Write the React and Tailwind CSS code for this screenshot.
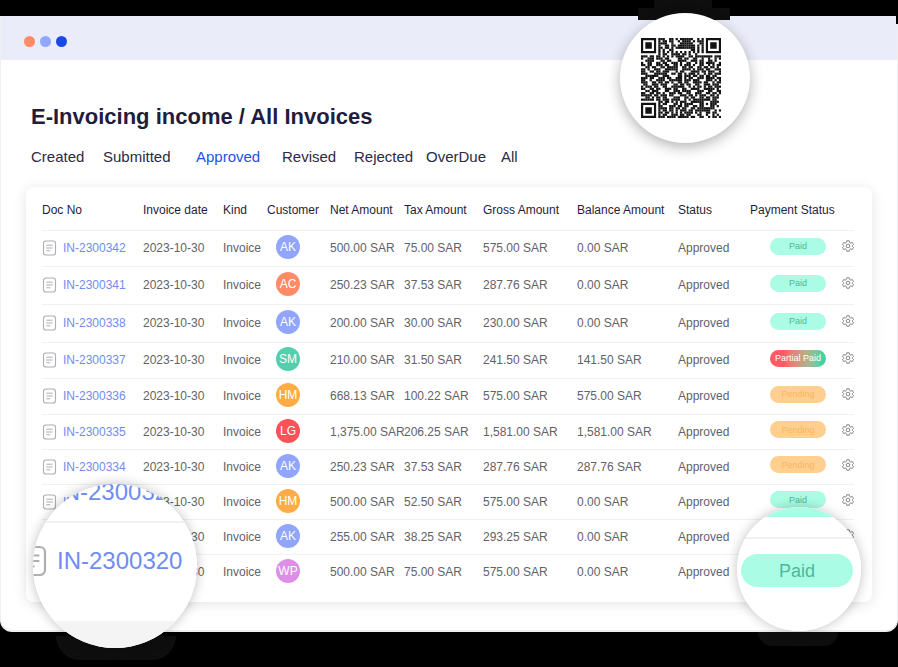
const tabs = ["Created", "Submitted", "Approved", "Revised", "Rejected", "OverDue", "All"];

const customers = {
  AK: "bg-[#90a5fb]",
  AC: "bg-[#ff8b66]",
  SM: "bg-[#55ceae]",
  HM: "bg-[#ffab48]",
  LG: "bg-[#fb5257]",
  WP: "bg-[#dd8fe8]",
};

const statuses = {
  Paid: "bg-[#aafde4] text-[#4fb79a]",
  "Partial Paid": "bg-linear-to-r from-[#ff5a63] from-25% to-[#45d3a5] to-90% text-white",
  Pending: "bg-[#ffcf90] text-[#f8b75c]",
};

const invoices = [
  ["IN-2300342", "AK", "500.00", "75.00", "575.00", "0.00", "Paid", "h-9"],
  ["IN-2300341", "AC", "250.23", "37.53", "287.76", "0.00", "Paid", "h-[38px]"],
  ["IN-2300338", "AK", "200.00", "30.00", "230.00", "0.00", "Paid", "h-[38px]"],
  ["IN-2300337", "SM", "210.00", "31.50", "241.50", "141.50", "Partial Paid", "h-9"],
  ["IN-2300336", "HM", "668.13", "100.22", "575.00", "575.00", "Pending", "h-9"],
  ["IN-2300335", "LG", "1,375.00", "206.25", "1,581.00", "1,581.00", "Pending", "h-[35px]"],
  ["IN-2300334", "AK", "250.23", "37.53", "287.76", "287.76", "Pending", "h-[35px]"],
  ["IN-2300322", "HM", "500.00", "52.50", "575.00", "0.00", "Paid", "h-[35px]"],
  ["IN-2300321", "AK", "255.00", "38.25", "293.25", "0.00", "Paid", "h-[35px]"],
  ["IN-2300320", "WP", "500.00", "75.00", "575.00", "0.00", "Paid", "h-[35px]"],
];

const qrRows = [
  "........###..##.#.######..#.#........",
  "........#.##.##..#.####.#.###........",
  "........####..#...######...##........",
  "........#..##.##.########.#.#........",
  "........##.##.#.#########.#.#........",
  "........#.#..##........##.#.#........",
  "........#.#.#.#.#.#.#.#.#.#.#........",
  "........#.##..####.##.#..#...........",
  "###.##.##.#.#.#.####..##.########.###",
  "#..###.###.##....##.##..##..#..#..#.#",
  "..####...##.##...####..###.##..##.#..",
  "#..##..##.##..###.#..##..#.##.####..#",
  "##.##..###.##..##.#.###.#..##..#.#.##",
  "..##.##..##.#####..##.##..##.##.##.#.",
  "##.#..###..######..####.#.###.##..###",
  "##..##.##.###...#.##...####.##.###..#",
  "###...######..##.##.#.###.#..#.##.###",
  "..######..###....##.###.##.##.##.##..",
  "###.##..###.##..###.#.##..###.####.##",
  "##..#..####..######.###.###...###.#.#",
  "###..##.##.##.#..##.##..####.##..#.##",
  ".##..###.###...##.##.##..##..###.###.",
  "#.###.##..##..######..#.#.##.#.##.###",
  "##..##.##..###.##..##..####..#####.#.",
  "..##.###...##..###.####...###..##..##",
  "##..##.##.#..###.##..##..###..##.##.#",
  "#####.##.###.##...###.##.#.###..##.#.",
  "..##.#.##.##...###..##.##..##.##.###.",
  "######.##.###.####..#.#.########.##..",
  "........##.##.#.#.###..######...####.",
  "........#.##...##.#.####...##.#.###..",
  "........##...###.##.##..##.##...##.#.",
  "........####.##.##.##..##.########...",
  "........#.##.##.#.###.##.#######..#.#",
  "........##.##.#.#.#.####.#.#..##.##..",
  "........#.##..###.##.##...##..#..#.#.",
  "........###.####.#####.##..##..#.##.#",
];

function QrCode() {
  return (
    <svg viewBox="0 0 37 37" className="size-20" fill="#121212" role="img" aria-label="QR code">
      {qrRows.flatMap((row, y) =>
        [...row].map((cell, x) =>
          cell === "#" ? <rect key={`${x}-${y}`} x={x} y={y} width="1.03" height="1.03" /> : null,
        ),
      )}
      {[[0, 0], [30, 0], [0, 30]].map(([x, y]) => (
        <path
          key={`${x}-${y}`}
          fillRule="evenodd"
          d={`M${x} ${y}h7v7h-7zM${x + 1} ${y + 1}v5h5v-5zM${x + 2} ${y + 2}h3v3h-3z`}
        />
      ))}
    </svg>
  );
}

function DocIcon({ className }) {
  return (
    <svg viewBox="0 0 14 16" className={className} fill="none" stroke="#adadb2" strokeLinecap="round" aria-hidden="true">
      <rect x="1" y="1" width="12" height="14" rx="2.6" strokeWidth="1.1" />
      <path d="M4.2 5.2h5.600M4.200 8h5.600M4.200 10.800h3.200" strokeWidth="1" />
    </svg>
  );
}

function GearIcon() {
  return (
    <svg viewBox="0 0 24 24" className="size-3" fill="none" stroke="#77777c" strokeWidth="1.8" strokeLinejoin="round" aria-hidden="true">
      <path d="M9.6 1.5h4.8l.8 3.3 2.2 1.3 3.3-1 2.3 4.1L20.600 11.500v1L23 14.800l-2.300 4.100-3.300-1-2.200 1.300-.8 3.300H9.600l-.8-3.300-2.200-1.300-3.300 1L1 14.800l2.400-2.300v-1L1 9.200l2.300-4.100 3.300 1 2.200-1.300z" />
      <circle cx="12" cy="12" r="3.6" />
    </svg>
  );
}

function InvoiceRow({ invoice }) {
  const [id, customer, net, tax, gross, balance, status, height] = invoice;
  return (
    <tr className={`${height} border-t border-[#f1f1f3]`}>
      <td>
        <div className="flex items-center gap-1.5">
          <DocIcon className="h-4 w-[15px]" />
          <a href={`#${id}`} className="text-[#6f8df0]">{id}</a>
        </div>
      </td>
      <td>2023-10-30</td>
      <td>Invoice</td>
      <td>
        <span className={`mb-0.5 ml-[9px] flex size-6 items-center justify-center rounded-full text-white ${customers[customer]}`}>
          {customer}
        </span>
      </td>
      <td>{net} SAR</td>
      <td>{tax} SAR</td>
      <td>{gross} SAR</td>
      <td>{balance} SAR</td>
      <td>Approved</td>
      <td>
        <span className={`mb-1 ml-5 flex h-[17px] w-14 items-center justify-center rounded-full text-[9px] ${statuses[status]}`}>
          {status}
        </span>
      </td>
      <td>
        <button type="button" aria-label={`Settings for ${id}`} className="mb-1 ml-0.5 block">
          <GearIcon />
        </button>
      </td>
    </tr>
  );
}

export default function App() {
  return (
    <div className="relative min-h-screen overflow-hidden bg-black pt-4 pb-9 font-['Liberation_Sans',Arial,sans-serif]">
      <main className="rounded-b-xl border-x border-b-2 border-[#eeeff1] bg-white pb-7">
        <div className="flex h-11 items-center gap-[5px] bg-[#eaedf9] pt-1.5 pl-[23px]">
          <span className="size-[11px] rounded-full bg-[#ff8b66]" />
          <span className="size-[11px] rounded-full bg-[#93a7fa]" />
          <span className="size-[11px] rounded-full bg-[#1b49e6]" />
        </div>

        <h1 className="mt-[43px] ml-[30px] text-[22px] leading-7 font-bold text-[#1f1d3d]">E-Invoicing income / All Invoices</h1>

        <nav className="mt-4 ml-[30px] grid grid-cols-[72px_93px_86px_72px_72px_75px_auto] text-[15px] leading-5 text-[#2c2a45]">
          {tabs.map((tab) => (
            <a key={tab} href={`#${tab}`} className={tab === "Approved" ? "text-[#2152e4]" : ""}>
              {tab}
            </a>
          ))}
        </nav>

        <section className="mt-5 mr-[25px] ml-[25px] rounded-lg bg-white pr-[18px] pb-[13px] pl-4 shadow-[0_2px_14px_rgba(0,0,0,0.11)]">
          <table className="w-full table-fixed border-collapse text-left text-xs whitespace-nowrap text-[#626267]">
            <colgroup>
              <col className="w-[101px]" />
              <col className="w-20" />
              <col className="w-11" />
              <col className="w-[63px]" />
              <col className="w-[74px]" />
              <col className="w-[79px]" />
              <col className="w-[94px]" />
              <col className="w-[101px]" />
              <col className="w-[72px]" />
              <col className="w-[90px]" />
              <col className="w-[14px]" />
            </colgroup>
            <thead className="text-[#1f1d3d]">
              <tr className="h-[43px] [&>th]:pt-1 [&>th]:font-normal">
                <th>Doc No</th>
                <th>Invoice date</th>
                <th>Kind</th>
                <th>Customer</th>
                <th>Net Amount</th>
                <th>Tax Amount</th>
                <th>Gross Amount</th>
                <th>Balance Amount</th>
                <th>Status</th>
                <th>Payment Status</th>
                <td />
              </tr>
            </thead>
            <tbody>
              {invoices.map((invoice) => (
                <InvoiceRow key={invoice[0]} invoice={invoice} />
              ))}
            </tbody>
          </table>
        </section>
      </main>

      {/* Clipped window corner */}
      <div className="absolute top-4 right-0 h-2 w-0.5 bg-black" />

      {/* QR code bubble */}
      <div className="absolute top-0 left-[654px] h-2 w-[58px] bg-[#0e0e0e]" />
      <div className="absolute top-2 left-[638px] h-3 w-[92px] bg-[#0e0e0e]" />
      <div className="absolute top-[13px] left-[620px] flex size-[130px] items-center justify-center rounded-full bg-white pr-2 shadow-[0_4px_14px_rgba(0,0,0,0.3)]">
        <QrCode />
      </div>

      {/* Document number magnifier */}
      <div className="absolute top-[636px] left-[56px] h-6 w-[120px] rounded-b-full bg-[#0e0e0e]" />
      <div className="absolute top-[484px] left-[33px] size-[164px] rounded-full shadow-[0_0_12px_rgba(0,0,0,0.25)]">
        <div className="flex size-full flex-col overflow-hidden rounded-full bg-white text-2xl text-[#6f8df0]">
          <div className="h-[39px] shrink-0 border-b-2 border-[#f1f1f3] pl-[23px] leading-4">IN-2300321</div>
          <div className="-ml-[14px] flex h-[76px] shrink-0 items-center gap-2.5">
            <DocIcon className="h-8 w-7 shrink-0" />
            <span>IN-2300320</span>
          </div>
          <div className="mt-[22px] grow bg-[#f4f4f5]" />
        </div>
      </div>

      {/* Payment status magnifier */}
      <div className="absolute top-[632px] left-[758px] h-3.5 w-20 rounded-b-full bg-[#0e0e0e]" />
      <div className="absolute top-[507px] left-[737px] size-[124px] rounded-full shadow-[0_0_12px_rgba(0,0,0,0.25)]">
        <div className="flex size-full flex-col items-center overflow-hidden rounded-full bg-white pr-1">
          <div className="h-2.5 w-full shrink-0 bg-[#aafde4]" />
          <div className="h-[22px] w-full shrink-0 border-b-2 border-[#f1f1f3]" />
          <div className="mt-[15px] flex h-[33px] w-28 shrink-0 items-center justify-center rounded-full bg-[#aafde4] text-lg text-[#4fb79a]">
            Paid
          </div>
        </div>
      </div>
    </div>
  );
}
